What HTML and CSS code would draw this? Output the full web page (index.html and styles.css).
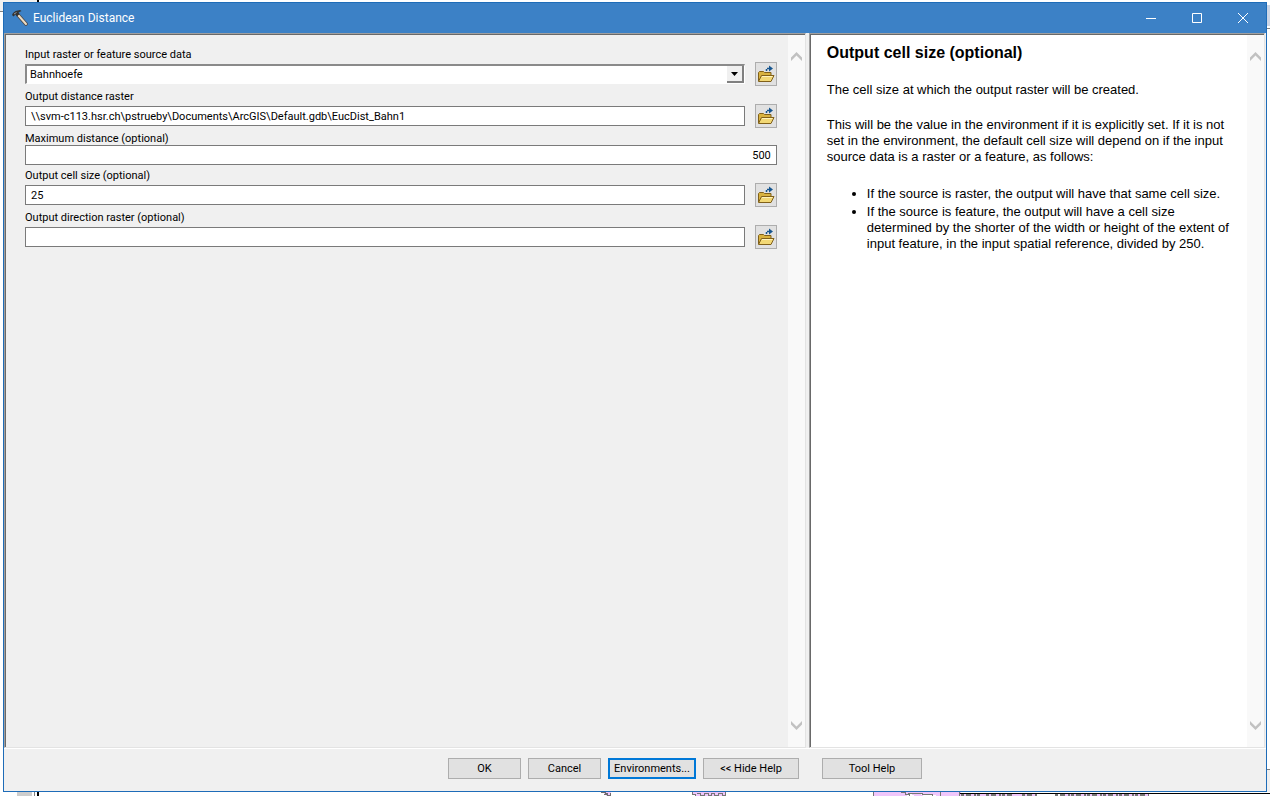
FILE: index.html
```html
<!DOCTYPE html>
<html lang="en">
<head>
    <meta charset="UTF-8">
    <meta name="viewport" content="width=device-width, initial-scale=1.0">
    <title>Euclidean Distance</title>
    <link rel="stylesheet" href="styles.css">
</head>
<body>
    <!-- shared icons -->
    <svg class="defs" aria-hidden="true">
        <symbol id="folder" viewBox="0 0 18 18">
            <path d="M1.500 16V7.500l1-1h4l1 1h6.500v3" fill="#d9b340" stroke="#80601a"/>
            <path d="M1.500 16.500L4.500 10.500h12.500l-3 6z" fill="#f2d875" stroke="#80601a"/>
            <path d="M5 11.500h10.500" stroke="#fff3bd"/>
            <path d="M9.500 6V3.500H13" fill="none" stroke="#16558f" stroke-width="1.500" stroke-dasharray="2 1"/>
            <path d="M12 0.500L16 3.500L12 6.500z" fill="#16558f"/>
        </symbol>
        <symbol id="chevron-up" viewBox="0 0 11 9">
            <path d="M0 5.500L5.500 0L11 5.500V9L5.500 3.500L0 9z" fill="#c1c1c1"/>
        </symbol>
        <symbol id="chevron-down" viewBox="0 0 11 9">
            <path d="M0 3.500L5.500 9L11 3.500V0L5.500 5.500L0 0z" fill="#c1c1c1"/>
        </symbol>
    </svg>

    <svg class="strip-top" aria-hidden="true">
        <rect width="37" height="2" fill="#f0f0f0"/>
        <rect x="37" width="2" height="2" fill="#000"/>
    </svg>

    <div class="desktop">
        <div class="edge edge-left"></div>
        <main class="window">
            <header class="titlebar">
                <svg class="hammer" viewBox="0 0 16 16" aria-hidden="true">
                    <path d="M6 5L14 14" stroke="#4d4540" stroke-width="3.500" stroke-linecap="round"/>
                    <path d="M6.500 5.500L14 14" stroke="#ecdcc4" stroke-width="2" stroke-linecap="round"/>
                    <path d="M0 5L1 3L3.500 1L8 0L9.500 1L6.500 2.500L7.500 4L5 6.500L3.500 4.500L1.500 6.500z" fill="#333"/>
                    <path d="M2 4L4.500 2.500" stroke="#999"/>
                </svg>
                <h1>Euclidean Distance</h1>
                <div class="window-buttons">
                    <button type="button" aria-label="Minimize"><svg viewBox="0 0 10 10"><path d="M0 5.500h10"/></svg></button>
                    <button type="button" aria-label="Maximize"><svg viewBox="0 0 10 10"><path d="M0.500 0.500h9v9h-9z"/></svg></button>
                    <button type="button" aria-label="Close"><svg viewBox="0 0 10 10"><path d="M0 0L10 10M10 0L0 10"/></svg></button>
                </div>
            </header>

            <form class="dialog">
                <div class="panes">
                    <section class="pane">
                        <div class="fields">
                            <div class="field">
                                <label for="source">Input raster or feature source data</label>
                                <div class="row">
                                    <div class="combo">
                                        <select id="source"><option>Bahnhoefe</option></select>
                                        <span class="combo-arrow"><svg viewBox="0 0 7 4"><path d="M0 0h7L3.500 4z"/></svg></span>
                                    </div>
                                    <button type="button" class="browse" aria-label="Browse"><svg><use href="#folder"/></svg></button>
                                </div>
                            </div>
                            <div class="field">
                                <label for="distance">Output distance raster</label>
                                <div class="row">
                                    <input type="text" id="distance" value="\\svm-c113.hsr.ch\pstrueby\Documents\ArcGIS\Default.gdb\EucDist_Bahn1">
                                    <button type="button" class="browse" aria-label="Browse"><svg><use href="#folder"/></svg></button>
                                </div>
                            </div>
                            <div class="field">
                                <label for="maximum">Maximum distance (optional)</label>
                                <div class="row plain">
                                    <input type="text" id="maximum" class="number" value="500">
                                </div>
                            </div>
                            <div class="field">
                                <label for="cellsize">Output cell size (optional)</label>
                                <div class="row">
                                    <input type="text" id="cellsize" value="25">
                                    <button type="button" class="browse" aria-label="Browse"><svg><use href="#folder"/></svg></button>
                                </div>
                            </div>
                            <div class="field">
                                <label for="direction">Output direction raster (optional)</label>
                                <div class="row">
                                    <input type="text" id="direction">
                                    <button type="button" class="browse" aria-label="Browse"><svg><use href="#folder"/></svg></button>
                                </div>
                            </div>
                        </div>
                        <div class="scrollbar">
                            <svg><use href="#chevron-up"/></svg>
                            <svg><use href="#chevron-down"/></svg>
                        </div>
                    </section>

                    <section class="pane help">
                        <article>
                            <h2>Output cell size (optional)</h2>
                            <p>The cell size at which the output raster will be created.</p>
                            <p>This will be the value in the environment if it is explicitly set. If it is not set in the environment, the default cell size will depend on if the input source data is a raster or a feature, as follows:</p>
                            <ul>
                                <li>If the source is raster, the output will have that same cell size.</li>
                                <li>If the source is feature, the output will have a cell size determined by the shorter of the width or height of the extent of input feature, in the input spatial reference, divided by 250.</li>
                            </ul>
                        </article>
                        <div class="scrollbar">
                            <svg><use href="#chevron-up"/></svg>
                            <svg><use href="#chevron-down"/></svg>
                        </div>
                    </section>
                </div>

                <footer class="actions">
                    <button type="button" class="btn">OK</button>
                    <button type="button" class="btn">Cancel</button>
                    <button type="button" class="btn default">Environments...</button>
                    <button type="button" class="btn wide">&lt;&lt; Hide Help</button>
                    <button type="button" class="btn wide tool-help">Tool Help</button>
                </footer>
            </form>
        </main>
        <div class="edge edge-right"></div>
    </div>

    <!-- map behind the dialog -->
    <svg class="strip-bottom" aria-hidden="true">
        <rect x="17" width="15" height="4" fill="#cdcdcd"/>
        <rect x="34" width="1" height="4" fill="#808080"/>
        <rect x="37" width="2" height="4" fill="#000"/>
        <g shape-rendering="crispEdges">
            <path d="M602 0h9v2l-2 2h-3z" fill="#efc6fb"/>
            <path d="M601 0h4v1h2v2h3v-2h1M604 2h3v2" fill="none" stroke="#707070"/>
            <path d="M692 0h34v2l-3 2h-26l-5-3z" fill="#efc6fb"/>
            <path d="M692 0v2h3v2h3M697 1h3v2h4v-2h4v2h3v-2h3v2h4v-2h4v2h3v-3" fill="none" stroke="#777"/>
            <path d="M873 0h88v4h-88z" fill="#efc6fb"/>
            <path d="M906 2h5l4 2h-8zM920 2h10l8 2h-14z" fill="#fff"/>
            <path d="M873 0v4M901 0h4v2h4v2M908 1h14v1h10v2M940 0v4M959 0v4" fill="none" stroke="#777"/>
            <path d="M961 2h76v2h-76zM1060 2h89v2h-89z" fill="#efc6fb"/>
            <path d="M961 3h20M986 3h29M1022 3h15M1055 3h94" stroke="#777" stroke-width="2" stroke-dasharray="3 2 5 3 2 1"/>
            <path d="M960 1h310v1h-310z" fill="#000"/>
        </g>
    </svg>
</body>
</html>
```

FILE: styles.css
```css
* {
    box-sizing: border-box;
}

body {
    margin: 0;
    height: 100vh;
    display: flex;
    flex-direction: column;
    background: #fff;
    color: #000;
    font-family: Roboto, Tahoma, sans-serif;
    font-size: 11px;
    overflow: hidden;
}

button, input, select {
    font: inherit;
    color: inherit;
    border-radius: 0;
    margin: 0;
}

.defs {
    position: absolute;
    width: 0;
    height: 0;
}

.strip-top {
    width: 100%;
    height: 2px;
}

.strip-bottom {
    width: 100%;
    height: 4px;
}

.desktop {
    flex: 1;
    min-height: 0;
    display: flex;
}

.edge {
    width: 3px;
}

.edge-left {
    background: linear-gradient(#f0f0f0 9px, #808080 9px, #808080 10px, #fff 10px);
}

.edge-right {
    background: linear-gradient(#fff 3px, #cdd6e6 3px, #cdd6e6 24px, #fff 24px, #fff 26px, #808080 26px, #808080 27px, #fff 27px, #fff calc(100% - 23px), #808080 calc(100% - 23px), #808080 calc(100% - 22px), #f0f0f0 calc(100% - 22px));
}

.window {
    flex: 1;
    min-width: 0;
    display: flex;
    flex-direction: column;
    border: 1px solid #1e6cb8;
    background: #f0f0f0;
}

/* Title bar */
.titlebar {
    display: flex;
    align-items: center;
    height: 30px;
    padding-left: 8px;
    background: #3c81c6;
    color: #fff;
}

.hammer {
    width: 16px;
    height: 16px;
    fill: none;
}

.titlebar h1 {
    margin: 0 0 0 5px;
    font-size: 12px;
    line-height: 14px;
    font-weight: normal;
}

.window-buttons {
    display: flex;
    margin-left: auto;
}

.window-buttons button {
    width: 46px;
    height: 28px;
    padding: 0;
    border: none;
    background: none;
}

.window-buttons svg {
    width: 10px;
    height: 10px;
    display: block;
    margin: 0 auto;
    fill: none;
    stroke: #fff;
}

/* Panes */
.dialog {
    flex: 1;
    min-height: 0;
    display: flex;
    flex-direction: column;
}

.panes {
    flex: 1;
    min-height: 0;
    display: grid;
    grid-template-columns: minmax(0, 58fr) minmax(0, 33fr);
    gap: 3px;
    padding-right: 1px;
    border-bottom: 1px solid #fff;
}

.pane {
    display: flex;
    padding: 1px 0 0 1px;
    border: 1px solid #e3e3e3;
    border-top-color: #a0a0a0;
    border-left-color: #a0a0a0;
    box-shadow: inset 1px 1px #696969;
}

.fields {
    flex: 1;
    min-width: 0;
    display: flex;
    flex-direction: column;
    gap: 5px;
    padding: 14px 11px 0 19px;
}

label {
    display: block;
    line-height: 12px;
}

.row {
    display: flex;
    align-items: center;
    gap: 10px;
    margin-top: 1px;
    height: 24px;
}

.row.plain {
    margin-top: 0;
    height: 20px;
}

.row input {
    flex: 1;
    min-width: 0;
    height: 20px;
    padding: 0 5px;
    border: 1px solid #7a7a7a;
    background: #fff;
}

.row .number {
    text-align: right;
}

.combo {
    position: relative;
    flex: 1;
    height: 20px;
    border: 1px solid #fff;
    border-top: 2px solid #8a8a8a;
    border-left: 2px solid #8a8a8a;
    background: #fff;
}

.combo select {
    display: block;
    width: 100%;
    height: 100%;
    padding: 0 3px;
    border: none;
    background: #fff;
    appearance: none;
}

.combo-arrow {
    position: absolute;
    top: 0;
    right: 0;
    width: 17px;
    height: 17px;
    display: flex;
    align-items: center;
    justify-content: center;
    border-right: 2px solid #808080;
    border-bottom: 2px solid #808080;
    background: #f0f0f0;
    pointer-events: none;
}

.combo-arrow svg {
    width: 7px;
    height: 4px;
}

.browse {
    width: 22px;
    height: 24px;
    padding: 0;
    border: 1px solid #adadad;
    background: #e1e1e1;
}

.browse svg {
    width: 18px;
    height: 18px;
    display: block;
    margin: 0 auto;
}

.scrollbar {
    width: 17px;
    display: flex;
    flex-direction: column;
    align-items: center;
    justify-content: space-between;
    padding: 17px 0;
    background: #f9f9f9;
}

.scrollbar svg {
    width: 11px;
    height: 9px;
}

/* Help pane */
.help {
    background: #fff;
    font-family: "Liberation Sans", Arial, sans-serif;
    font-size: 13px;
    line-height: 16px;
}

.help article {
    flex: 1;
    padding: 8px 12px 0 16px;
}

.help h2 {
    margin: 0 0 20px;
    font-size: 16px;
    line-height: 19px;
}

.help p {
    margin: 0 0 19px;
}

.help ul {
    margin: 21px 0 0;
    padding-left: 40px;
}

.help li {
    margin-bottom: 2px;
}

/* Bottom buttons */
.actions {
    display: flex;
    justify-content: center;
    gap: 7px;
    padding: 9px 0 12px;
    margin-left: 100px;
}

.btn {
    width: 73px;
    height: 21px;
    padding: 0;
    border: 1px solid #adadad;
    background: #e1e1e1;
    white-space: nowrap;
}

.btn.default {
    width: 88px;
    border: 2px solid #0078d7;
}

.btn.wide {
    width: 96px;
}

.btn.tool-help {
    width: 100px;
    margin-left: 16px;
}
```
